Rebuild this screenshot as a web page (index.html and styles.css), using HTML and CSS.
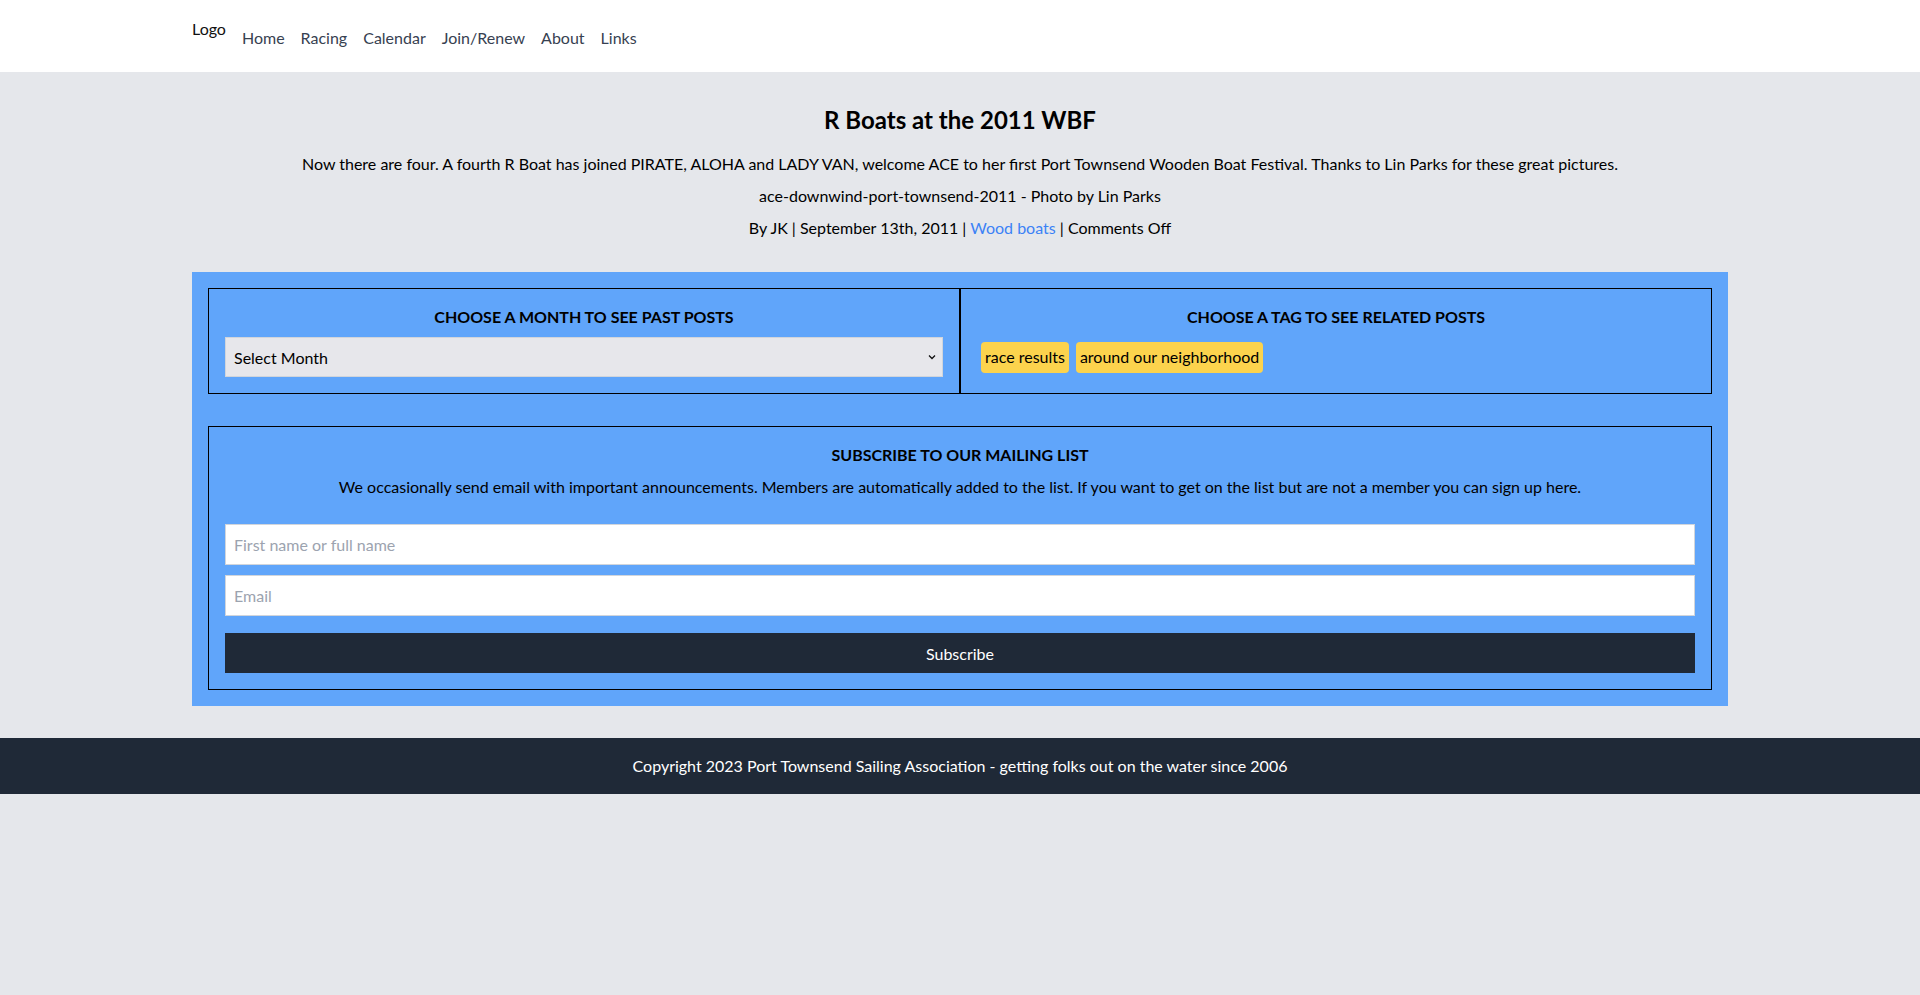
FILE: index.html
```html
<!DOCTYPE html>
<html lang="en">
<head>
<meta charset="utf-8">
<title>R Boats at the 2011 WBF</title>
<link rel="stylesheet" href="styles.css">
</head>
<body>
<header class="site-header">
  <div class="container header-inner">
    <div class="logo">Logo</div>
    <nav class="nav">
      <a href="#">Home</a>
      <a href="#">Racing</a>
      <a href="#">Calendar</a>
      <a href="#">Join/Renew</a>
      <a href="#">About</a>
      <a href="#">Links</a>
    </nav>
  </div>
</header>

<main class="main">
  <article class="post">
    <h1 class="post-title">R Boats at the 2011 WBF</h1>
    <p>Now there are four. A fourth R Boat has joined PIRATE, ALOHA and LADY VAN, welcome ACE to her first Port Townsend Wooden Boat Festival. Thanks to Lin Parks for these great pictures.</p>
    <p>ace-downwind-port-townsend-2011 - Photo by Lin Parks</p>
    <p>By JK | September 13th, 2011 | <a class="link" href="#">Wood boats</a> | Comments Off</p>
  </article>

  <section class="container widgets">
    <div class="widget-row">
      <div class="widget">
        <h2 class="widget-title">CHOOSE A MONTH TO SEE PAST POSTS</h2>
        <div class="select-wrap">
          <select class="select">
            <option>Select Month</option>
          </select>
          <svg class="chevron" width="10" height="10" viewBox="0 0 10 10"><path d="M2 3.5 L5 6.5 L8 3.5" fill="none" stroke="#111" stroke-width="1.3"/></svg>
        </div>
      </div>
      <div class="widget">
        <h2 class="widget-title">CHOOSE A TAG TO SEE RELATED POSTS</h2>
        <div class="tags">
          <a class="tag" href="#">race results</a>
          <a class="tag" href="#">around our neighborhood</a>
        </div>
      </div>
    </div>

    <div class="widget subscribe">
      <h2 class="widget-title">SUBSCRIBE TO OUR MAILING LIST</h2>
      <p class="sub-desc">We occasionally send email with important announcements. Members are automatically added to the list. If you want to get on the list but are not a member you can sign up here.</p>
      <form class="sub-form">
        <input class="input" type="text" placeholder="First name or full name">
        <input class="input" type="email" placeholder="Email">
        <button class="btn" type="button">Subscribe</button>
      </form>
    </div>
  </section>
</main>

<footer class="footer">
  Copyright 2023 Port Townsend Sailing Association - getting folks out on the water since 2006
</footer>
</body>
</html>
```
FILE: styles.css
```css
* { box-sizing: border-box; }
html, body { margin: 0; padding: 0; }
body {
  background: #e5e7eb;
  font-family: "Lato", "Segoe UI", sans-serif;
  font-size: 16px;
  line-height: 24px;
  color: #000;
}
.container {
  width: 1536px;
  margin: 0 auto;
}
.site-header {
  background: #fff;
  height: 72px;
}
.header-inner {
  display: flex;
  align-items: flex-start;
  padding-top: 17px;
}
.logo {
  color: #111;
  line-height: 24px;
  font-weight: 400;
}
.nav {
  display: flex;
  padding-left: 8px;
  padding-top: 1px;
}
.nav a {
  color: #374151;
  text-decoration: none;
  padding: 8px 8px;
  line-height: 24px;
}
.main {
  padding-top: 32px;
}
.post {
  text-align: center;
}
.post-title {
  font-size: 24px;
  line-height: 32px;
  font-weight: 700;
  margin: 0 0 16px;
}
.post p {
  margin: 0 0 8px;
}
.link {
  color: #3b82f6;
  text-decoration: none;
}
.widgets {
  margin-top: 32px;
  background: #60a5fa;
  padding: 16px;
}
.widget-row {
  display: grid;
  grid-template-columns: 1fr 1fr;
}
.widget {
  border: 1px solid #000;
  padding: 16px;
  text-align: center;
}
.widget-title {
  margin: 0;
  font-size: 16px;
  line-height: 24px;
  font-weight: 700;
}
.select-wrap {
  position: relative;
  margin-top: 8px;
}
.select {
  appearance: none;
  -webkit-appearance: none;
  display: block;
  width: 100%;
  height: 40px;
  background: #e7e7eb;
  border: 1px solid #d1d5db;
  border-radius: 0;
  padding: 0 8px;
  font-family: inherit;
  font-size: 16px;
  color: #000;
}
.chevron {
  position: absolute;
  right: 6px;
  top: 15px;
}
.tags {
  display: flex;
  flex-wrap: wrap;
  margin-top: 13px;
}
.tag {
  background: #fcd34d;
  color: #000;
  text-decoration: none;
  padding: 3px 4px 4px;
  border-radius: 4px;
  margin: 0 7px 0 4px;
  line-height: 24px;
}
.tag + .tag { margin-left: 0; }
.subscribe {
  margin-top: 32px;
}
.sub-desc {
  margin: 8px 0 25px;
}
.sub-form {
  display: flex;
  flex-direction: column;
}
.input {
  height: 41px;
  width: 100%;
  border: 1px solid #d1d5db;
  background: #fff;
  padding: 0 8px;
  font-family: inherit;
  font-size: 16px;
  margin-bottom: 10px;
}
.input::placeholder { color: #9ca3af; }
.btn {
  margin-top: 7px;
  height: 40px;
  width: 100%;
  background: #1f2937;
  color: #fff;
  border: 0;
  font-family: inherit;
  font-size: 16px;
}
.footer {
  margin-top: 32px;
  background: #1f2937;
  color: #fff;
  text-align: center;
  padding: 16px 0;
  line-height: 24px;
}
```
